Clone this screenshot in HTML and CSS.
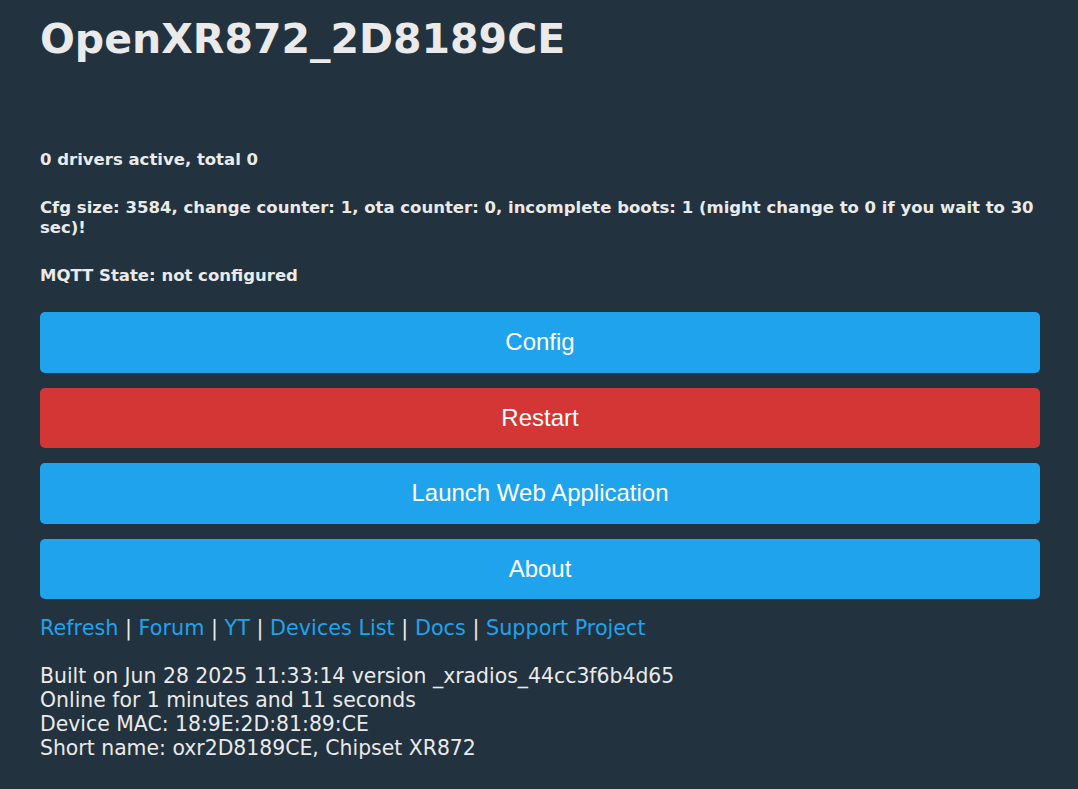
FILE: index.html
```html
<!DOCTYPE html>
<html>
<head>
<meta charset="utf-8">
<link rel="stylesheet" href="styles.css">
</head>
<body>
<div class="page">
  <h1 class="title">OpenXR872_2D8189CE</h1>
  <div class="status">
    <p class="info">0 drivers active, total 0</p>
    <p class="info">Cfg size: 3584, change counter: 1, ota counter: 0, incomplete boots: 1 (might change to 0 if you wait to 30 sec)!</p>
    <p class="info">MQTT State: not configured</p>
  </div>
  <div class="buttons">
    <button class="btn">Config</button>
    <button class="btn btn-red">Restart</button>
    <button class="btn">Launch Web Application</button>
    <button class="btn">About</button>
  </div>
  <div class="links">
    <a href="#">Refresh</a> | <a href="#">Forum</a> | <a href="#">YT</a> | <a href="#">Devices List</a> | <a href="#">Docs</a> | <a href="#">Support Project</a>
  </div>
  <div class="footer">
    <div>Built on Jun 28 2025 11:33:14 version _xradios_44cc3f6b4d65</div>
    <div>Online for 1 minutes and 11 seconds</div>
    <div>Device MAC: 18:9E:2D:81:89:CE</div>
    <div>Short name: oxr2D8189CE, Chipset XR872</div>
  </div>
</div>
</body>
</html>
```
FILE: styles.css
```css
html, body {
  margin: 0;
  padding: 0;
  background: #22323f;
}
body {
  color: #eaeaea;
  font-family: "DejaVu Sans", Verdana, sans-serif;
}
.page {
  width: 1000px;
  padding: 0 38px 0 40px;
}
.title {
  margin: 0;
  padding-top: 13px;
  font-size: 41px;
  line-height: 52px;
  font-weight: bold;
}
.status {
  margin-top: 85px;
}
.info {
  margin: 0 0 28px 0;
  font-size: 16.5px;
  line-height: 20px;
  font-weight: bold;
}
.info:last-child {
  margin-bottom: 0;
}
.buttons {
  display: flex;
  flex-direction: column;
  gap: 15px;
  margin-top: 26px;
}
.btn {
  display: block;
  width: 100%;
  height: 60.5px;
  border: 0;
  border-radius: 5px;
  background: #1fa3ec;
  color: #fff;
  font-family: "Liberation Sans", Arial, sans-serif;
  font-size: 24px;
  padding: 0;
}
.btn-red {
  background: #d43535;
}
.links {
  margin-top: 17px;
  font-size: 20.75px;
  line-height: 24px;
}
.links a {
  color: #1fa3ec;
  text-decoration: none;
}
.footer {
  margin-top: 24px;
  font-size: 20.4px;
  line-height: 24px;
}
```
